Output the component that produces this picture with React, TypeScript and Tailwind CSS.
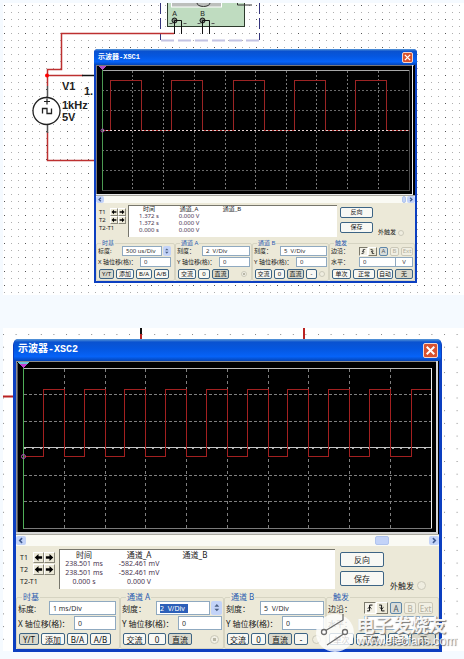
import { useId } from 'react';
import clsx from 'clsx';

const FONT = "font-['Noto_Sans','Noto_Sans_CJK_SC',sans-serif]";

/* ---------- size themes for the two oscilloscope windows ---------- */

const small = {
  frame: 'px-[2px] pb-[2px] rounded-t-[4px]',
  title: 'h-[16px] pl-[2px] pr-[2px] text-[7px] leading-[10px]',
  close: 'size-[11px] rounded-[2px]',
  scroll: 'h-[8px]',
  scrollButton: 'w-[8px] h-[7px]',
  thumb: 'w-[4px] mr-[1px]',
  text: 'text-[6px] leading-[7px]',
  measure: 'h-[35px] pt-[2px]',
  cursors: 'w-[32px] pl-[3px] pt-[3px]',
  cursorRow: 'h-[8px]',
  cursorLabel: 'w-[11px]',
  cursorButton: 'w-[8px] h-[8px]',
  readout: 'h-[32px] w-[209px]',
  readRow: 'h-[7px]',
  columns: ['w-[40px]', 'w-[40px]', 'w-[46px]'],
  actions: 'w-[33px] ml-[3px] gap-[4px] pt-[2px]',
  action: 'h-[11px]',
  external: 'ml-[5px] pb-[2px] gap-[2px]',
  radio: 'size-[6px]',
  groups: 'grid-cols-[79fr_77fr_77fr_86fr] pt-[2px]',
  legend: 'ml-[3px] leading-[6px]',
  field: 'h-[10px]',
  fieldPad: 'pl-[3px]',
  spinner: 'w-[8px]',
  rows: 'gap-[1px] pb-[1px]',
  buttons: 'pt-[1px] gap-[2px]',
  button: 'h-[10px]',
  icon: 'w-[9px] h-[9px]',
  letter: 'h-[9px] ml-[2px]',
};

const large: typeof small = {
  frame: 'px-[3px] pb-[3px] rounded-t-[6px]',
  title: 'h-[22px] pl-[2px] pr-[1px] text-[10px] leading-[14px]',
  close: 'size-[15px] rounded-[2px]',
  scroll: 'h-[12px]',
  scrollButton: 'w-[10px] h-[9px]',
  thumb: 'w-[14px] mr-[40px]',
  text: 'text-[8px] leading-[9px]',
  measure: 'h-[46px] pt-[3px]',
  cursors: 'w-[43px] pl-[4px] pt-[2px]',
  cursorRow: 'h-[12px]',
  cursorLabel: 'w-[13px]',
  cursorButton: 'w-[11px] h-[11px]',
  readout: 'h-[40px] w-[276px]',
  readRow: 'h-[9px]',
  columns: ['w-[48px]', 'w-[62px]', 'w-[50px]'],
  actions: 'w-[44px] ml-[5px] gap-[4px] pt-[3px]',
  action: 'h-[15px]',
  external: 'ml-[6px] pb-[2px] gap-[3px]',
  radio: 'size-[9px]',
  groups: 'grid-cols-[104fr_104fr_102fr_113fr] pt-[1px]',
  legend: 'ml-[4px] leading-[8px]',
  field: 'h-[14px]',
  fieldPad: 'pl-[3px]',
  spinner: 'w-[11px]',
  rows: 'gap-[1px] pb-[3px]',
  buttons: 'pt-[2px] gap-[2px]',
  button: 'h-[12px]',
  icon: 'w-[12px] h-[12px]',
  letter: 'h-[12px] ml-[2px]',
};

type Theme = typeof small;

/* ---------- small controls ---------- */

function PushButton({ t, label, width, pressed }: { t: Theme; label: string; width: string; pressed?: boolean }) {
  return (
    <button
      type="button"
      className={clsx(
        'flex shrink-0 items-center justify-center whitespace-nowrap rounded-[2px] border border-[#3d6484] text-[#111]',
        t.button,
        width,
        pressed ? 'bg-[#d9d8cc]' : 'bg-[#f8f8f4]',
      )}
    >
      {label}
    </button>
  );
}

type FieldProps = {
  t: Theme;
  label: string;
  labelWidth: string;
  value: string;
  valueText: string;
  selected?: boolean;
  spinner?: boolean;
  unit?: string;
  endPad?: string;
};

function Field({ t, label, labelWidth, value, valueText, selected, spinner, unit, endPad }: FieldProps) {
  const id = useId();
  return (
    <div className={clsx('flex items-center', t.field, endPad)}>
      <label htmlFor={id} className={clsx('shrink-0 whitespace-nowrap text-[#1a1a1a]', labelWidth)}>
        {label}
      </label>
      <span className={clsx('flex h-full min-w-0 flex-1 items-center border border-[#8fa9c0] bg-white', t.fieldPad)}>
        <input
          id={id}
          defaultValue={value}
          className={clsx(
            'min-w-0 outline-none',
            valueText,
            selected ? 'w-[28px] bg-[#2c5fb8] text-white' : 'w-full text-[#333]',
          )}
        />
      </span>
      {unit && (
        <input
          aria-label="V"
          defaultValue={unit}
          className={clsx('h-full w-[17px] border border-l-0 border-[#8fa9c0] bg-white text-center text-[#444]', valueText)}
        />
      )}
      {spinner && (
        <button type="button" className={clsx('ml-[1px] flex h-full items-center justify-center rounded-[2px] bg-[#c3d3f8]', t.spinner)}>
          <svg viewBox="0 0 8 10" className="h-[80%] w-[70%]">
            <path d="M1.5 4 4 1.3 6.5 4zM1.5 6.2 4 8.9 6.5 6.2z" fill="#4d6185" />
          </svg>
        </button>
      )}
    </div>
  );
}

function Radio({ t, label, dot }: { t: Theme; label: string; dot?: boolean }) {
  return (
    <input
      type="radio"
      aria-label={label}
      className={clsx(
        'shrink-0 appearance-none rounded-full border border-[#cbc9ba]',
        t.radio,
        dot ? 'bg-[radial-gradient(circle,#b8b6a6_35%,#f1efe4_40%)]' : 'bg-[#efede0]',
      )}
    />
  );
}

function Arrow({ flip }: { flip?: boolean }) {
  return (
    <svg viewBox="0 0 10 10" className={clsx('h-full w-full', flip && 'rotate-180')}>
      <path d="M.8 5 5 1.2v2.5h4v2.6H5v2.5z" fill="#000" />
    </svg>
  );
}

function Chevron({ flip }: { flip?: boolean }) {
  return (
    <svg viewBox="0 0 10 10" className={clsx('h-full w-full', flip && 'rotate-180')}>
      <path d="M6.2 2.4 3.6 5l2.6 2.6" fill="none" stroke="#3f5a92" strokeWidth="1.8" />
    </svg>
  );
}

function EdgeIcon({ falling }: { falling?: boolean }) {
  return (
    <svg viewBox="0 0 12 12" className="h-full w-full" fill="none" stroke="#111">
      {falling ? (
        <path d="M2.5 2.5H5.5V9.5H9M3.5 5.2 5.5 7.4 7.8 5.2" strokeWidth="1.2" />
      ) : (
        <path d="M2.5 9.5H5.5V2.5H9M3.5 6.8 5.5 4.6 7.8 6.8" strokeWidth="1.2" />
      )}
    </svg>
  );
}

/* ---------- scope screens ---------- */

function SmallTrace() {
  const columns = [36.5, 67.5, 98.5, 129.5, 159.5, 190.5, 220.5, 251.5, 282.5];
  const highs = [[14, 45], [75, 106], [137, 168], [198, 229], [259, 290]];
  const wave =
    'M6 65.5' + highs.map(([a, b]) => `H${a + 0.5}V15.5H${b + 0.5}V65.5`).join('') + 'H313';
  return (
    <svg viewBox="0 0 319 130" className="block w-full bg-black" shapeRendering="crispEdges">
      <path d="M1 .5H318M.5 0V130" stroke="#77777b" />
      <path d="M316.5 0V129.500M0 129.500H317" stroke="#e8e8e8" strokeWidth="1" fill="none" />
      <path d="M6 5.5H313" stroke="#a8a8a8" />
      <path d="M313.500 5V125.500H6" stroke="#4c4c4c" fill="none" />
      {columns.map((x) => (
        <path key={x} d={`M${x} 6V125`} stroke="#777" strokeDasharray="2 2" />
      ))}
      {[25.5, 45.5, 85.5, 105.5].map((y) => (
        <path key={y} d={`M6 ${y}H313`} stroke="#6a6a6a" strokeDasharray="2 2" />
      ))}
      <path d={wave} stroke="#9c2424" fill="none" />
      <path d="M6 65.5H313" stroke="#e8d5d5" strokeDasharray="2 2" />
      <path d="M6.500 5V125" stroke="#4c9a52" />
      <path d="M2 1h9L6.500 5z" fill="#b34fc4" />
      <circle cx="6.500" cy="65.500" r="1.500" stroke="#b052b8" fill="none" shapeRendering="auto" />
    </svg>
  );
}

function LargeTrace() {
  const columns = [48.5, 89.5, 129.5, 170.5, 211.5, 252.5, 292.5, 333.5, 374.5];
  const wave =
    'M7 95.500' + columns.map((x) => `H${x - 21}V28.500H${x}V95.500`).join('') + 'H395.500V28.500H415';
  return (
    <svg viewBox="0 0 423 173" className="block w-full bg-black" shapeRendering="crispEdges">
      <path d="M0 .5H422M.5 0V172" stroke="#8d8d8d" />
      <path d="M1.500 2V172" stroke="#55555a" />
      <path d="M421 0V171.500H0" stroke="#d5d5d5" strokeWidth="2" fill="none" />
      <path d="M8 7.500H416" stroke="#bdbdbd" />
      <path d="M415.500 7V167.500" stroke="#eee" />
      <path d="M8 167.500H416" stroke="#7a7a7a" />
      {columns.map((x) => (
        <path key={x} d={`M${x} 8V167`} stroke="#808080" strokeDasharray="3 3" />
      ))}
      {[33.5, 60.5, 114.5, 140.5].map((y) => (
        <path key={y} d={`M8 ${y}H415`} stroke="#808080" strokeDasharray="3 2" />
      ))}
      <path d="M8 86.500H415" stroke="#c4c4c4" />
      <path d="M8 87.500H415" stroke="#aaa" strokeDasharray="2 6" />
      <path d={wave} stroke="#a32020" fill="none" />
      <path d="M7.500 7V168" stroke="#4fae58" />
      <path d="M2 1h12L7.500 7z" fill="#6ec3d6" />
      <path d="M3.500 2.500h9L7.500 7z" fill="#c03fd0" />
      <circle cx="7.500" cy="95.500" r="2" stroke="#b052b8" fill="none" shapeRendering="auto" />
    </svg>
  );
}

/* ---------- parameter groups ---------- */

type ButtonSpec = { label: string; width: string; pressed?: boolean };
type GroupSpec = {
  title: string;
  fields: Omit<FieldProps, 't' | 'valueText'>[];
  buttons: ButtonSpec[];
  radio?: 'dot' | 'plain';
};

function Group({ t, spec, valueText }: { t: Theme; spec: GroupSpec; valueText: string }) {
  return (
    <fieldset className="min-w-0 rounded-[2px] border border-[#d6d4c2] px-[1px]">
      <legend className={clsx('px-[1px] text-[#2a5bb0]', t.legend)}>{spec.title}</legend>
      <div className={clsx('flex flex-col', t.rows)}>
        {spec.fields.map((f) => (
          <Field key={f.label} t={t} valueText={valueText} {...f} />
        ))}
        <div className={clsx('flex items-center pl-[1px]', t.buttons)}>
          {spec.buttons.map((b) => (
            <PushButton key={b.label} t={t} {...b} />
          ))}
          {spec.radio && (
            <span className="ml-auto flex pr-[3px]">
              <Radio t={t} label={spec.title} dot={spec.radio === 'dot'} />
            </span>
          )}
        </div>
      </div>
    </fieldset>
  );
}

type TriggerSpec = { edgeWidth: string; letterWidths: string[]; level: string; buttons: ButtonSpec[] };

function TriggerGroup({ t, spec, valueText }: { t: Theme; spec: TriggerSpec; valueText: string }) {
  return (
    <fieldset className="min-w-0 rounded-[2px] border border-[#d6d4c2] px-[1px]">
      <legend className={clsx('px-[1px] text-[#2a5bb0]', t.legend)}>触发</legend>
      <div className={clsx('flex flex-col', t.rows)}>
        <div className={clsx('flex items-center', t.field)}>
          <span className={clsx('shrink-0 whitespace-nowrap', spec.edgeWidth)}>边沿：</span>
          <button type="button" aria-label="上升沿" className={clsx('border border-[#7c7a6c] border-r-white border-b-white bg-[#f4f2e8]', t.icon)}>
            <EdgeIcon />
          </button>
          <button type="button" aria-label="下降沿" className={clsx('border border-white border-r-[#7c7a6c] border-b-[#7c7a6c] bg-[#ece9d8]', t.icon)}>
            <EdgeIcon falling />
          </button>
          {['A', 'B', 'Ext'].map((letter, i) => (
            <button
              key={letter}
              type="button"
              disabled={i > 0}
              className={clsx(
                'flex items-center justify-center rounded-[2px] border',
                t.letter,
                spec.letterWidths[i],
                i === 0 ? 'border-[#5d86a8] bg-[#d8dcda] text-[#4a5560]' : 'border-[#cbc8b8] bg-[#f1efe3] text-[#b0ad9c]',
              )}
            >
              {letter}
            </button>
          ))}
        </div>
        <Field t={t} label="水平：" labelWidth={spec.level} value="0" valueText={valueText} unit="V" />
        <div className={clsx('flex items-center pl-[1px]', t.buttons)}>
          {spec.buttons.map((b) => (
            <PushButton key={b.label} t={t} {...b} />
          ))}
        </div>
      </div>
    </fieldset>
  );
}

/* ---------- oscilloscope window ---------- */

type ScopeProps = {
  t: Theme;
  title: string;
  readings: string[][];
  valueText: string;
  groups: GroupSpec[];
  trigger: TriggerSpec;
  trace: React.ReactNode;
  className: string;
};

function ScopeWindow({ t, title, readings, valueText, groups, trigger, trace, className }: ScopeProps) {
  return (
    <section className={clsx('bg-[#0c3fc0]', t.frame, t.text, className)}>
      <header className="-mx-[2px] rounded-t-[4px] bg-[linear-gradient(#5b9ad8_0%,#0a52cf_14%,#0557e0_45%,#0663f8_80%,#0443b4_100%)]">
        <div className={clsx('flex items-center justify-between', t.title)}>
          <h1 className="ml-[2px] whitespace-nowrap font-['Liberation_Mono','Noto_Sans_CJK_SC',monospace] font-bold text-white">{title}</h1>
          <button type="button" aria-label="关闭" className={clsx('mr-[2px] border border-[#f2d6cf] bg-[#d8522f]', t.close)}>
            <svg viewBox="0 0 12 12" className="h-full w-full">
              <path d="M2.500 2.500 9.500 9.500M9.500 2.500 2.500 9.500" stroke="#fff" strokeWidth="1.800" />
            </svg>
          </button>
        </div>
      </header>
      {trace}
      <div className={clsx('flex items-center justify-between border-t border-[#aaa9a0] bg-[#fafaf4]', t.scroll)}>
        <button type="button" aria-label="向左" className={clsx('rounded-[2px] bg-[#c3d3f8]', t.scrollButton)}>
          <Chevron />
        </button>
        <span className="flex">
          <span className={clsx('rounded-[2px] border border-[#b0c4ee] bg-[#c3d3f8]', t.thumb)} />
          <button type="button" aria-label="向右" className={clsx('rounded-[2px] bg-[#c3d3f8]', t.scrollButton)}>
            <Chevron flip />
          </button>
        </span>
      </div>
      <div className="bg-[#ece9d8] text-[#1a1a1a]">
        <div className={clsx('flex', t.measure)}>
          <div className={clsx('shrink-0', t.cursors, valueText)}>
            {['T1', 'T2'].map((c) => (
              <div key={c} className={clsx('flex items-center', t.cursorRow)}>
                <span className={t.cursorLabel}>{c}</span>
                {[false, true].map((flip) => (
                  <button
                    key={String(flip)}
                    type="button"
                    aria-label={c + (flip ? ' →' : ' ←')}
                    className={clsx('border border-white border-r-[#8a887a] border-b-[#8a887a]', t.cursorButton)}
                  >
                    <Arrow flip={flip} />
                  </button>
                ))}
              </div>
            ))}
            <div className={clsx('flex items-center', t.cursorRow)}>T2-T1</div>
          </div>
          <div className={clsx('shrink border-l border-t border-[#77766c] bg-white', t.readout)}>
            <table className="table-fixed border-collapse text-center">
              <thead>
                <tr className={t.readRow}>
                  {['时间', '通道_A', '通道_B'].map((h, i) => (
                    <th key={h} className={clsx('p-0 font-normal', t.columns[i])}>
                      {h}
                    </th>
                  ))}
                </tr>
              </thead>
              <tbody className={clsx('text-[#4a3550]', valueText)}>
                {readings.map((row, i) => (
                  <tr key={i} className={t.readRow}>
                    <td className="whitespace-nowrap p-0">{row[0]}</td>
                    <td className="whitespace-nowrap p-0">{row[1]}</td>
                    <td className="p-0" />
                  </tr>
                ))}
              </tbody>
            </table>
          </div>
          <div className={clsx('flex shrink-0 flex-col', t.actions)}>
            {['反向', '保存'].map((a) => (
              <button
                key={a}
                type="button"
                className={clsx('flex items-center justify-center rounded-[2px] border border-[#3d6484] bg-[#f8f8f4]', t.action)}
              >
                {a}
              </button>
            ))}
          </div>
          <label className={clsx('flex items-center self-end whitespace-nowrap', t.external)}>
            外触发
            <Radio t={t} label="外触发" />
          </label>
        </div>
        <div className={clsx('grid', t.groups)}>
          {groups.map((g) => (
            <Group key={g.title} t={t} spec={g} valueText={valueText} />
          ))}
          <TriggerGroup t={t} spec={trigger} valueText={valueText} />
        </div>
      </div>
    </section>
  );
}

/* ---------- data ---------- */

const smallGroups: GroupSpec[] = [
  {
    title: '时基',
    fields: [
      { label: '标度:', labelWidth: 'w-[24px]', value: '500 us/Div', spinner: true, endPad: 'pr-[2px]' },
      { label: 'X 轴位移(格)：', labelWidth: 'w-[42px]', value: '0', endPad: 'pr-[2px]' },
    ],
    buttons: [
      { label: 'Y/T', width: 'w-[15px]', pressed: true },
      { label: '添加', width: 'w-[18px]' },
      { label: 'B/A', width: 'w-[16px]' },
      { label: 'A/B', width: 'w-[15px]' },
    ],
  },
  {
    title: '通道 A',
    fields: [
      { label: '刻度：', labelWidth: 'w-[25px]', value: '2  V/Div' },
      { label: 'Y 轴位移(格)：', labelWidth: 'w-[42px]', value: '0' },
    ],
    buttons: [
      { label: '交流', width: 'w-[18px]' },
      { label: '0', width: 'w-[12px]' },
      { label: '直流', width: 'w-[17px]', pressed: true },
    ],
    radio: 'dot',
  },
  {
    title: '通道 B',
    fields: [
      { label: '刻度：', labelWidth: 'w-[26px]', value: '5  V/Div' },
      { label: 'Y 轴位移(格)：', labelWidth: 'w-[42px]', value: '0' },
    ],
    buttons: [
      { label: '交流', width: 'w-[17px]' },
      { label: '0', width: 'w-[11px]' },
      { label: '直流', width: 'w-[17px]', pressed: true },
      { label: '-', width: 'w-[11px]' },
    ],
    radio: 'plain',
  },
];

const smallTrigger: TriggerSpec = {
  edgeWidth: 'w-[28px]',
  letterWidths: ['w-[9px]', 'w-[9px]', 'w-[12px]'],
  level: 'w-[28px]',
  buttons: [
    { label: '单次', width: 'w-[19px]' },
    { label: '正常', width: 'w-[22px]' },
    { label: '自动', width: 'w-[16px]' },
    { label: '无', width: 'w-[18px]', pressed: true },
  ],
};

const largeGroups: GroupSpec[] = [
  {
    title: '时基',
    fields: [
      { label: '标度:', labelWidth: 'w-[31px]', value: '1 ms/Div', endPad: 'pr-[2px]' },
      { label: 'X 轴位移(格)：', labelWidth: 'w-[56px]', value: '0', endPad: 'pr-[2px]' },
    ],
    buttons: [
      { label: 'Y/T', width: 'w-[20px]', pressed: true },
      { label: '添加', width: 'w-[24px]' },
      { label: 'B/A', width: 'w-[21px]' },
      { label: 'A/B', width: 'w-[21px]' },
    ],
  },
  {
    title: '通道 A',
    fields: [
      { label: '刻度：', labelWidth: 'w-[34px]', value: '2  V/Div', selected: true, spinner: true },
      { label: 'Y 轴位移(格)：', labelWidth: 'w-[56px]', value: '0' },
    ],
    buttons: [
      { label: '交流', width: 'w-[23px]' },
      { label: '0', width: 'w-[18px]' },
      { label: '直流', width: 'w-[24px]', pressed: true },
    ],
    radio: 'dot',
  },
  {
    title: '通道 B',
    fields: [
      { label: '刻度：', labelWidth: 'w-[34px]', value: '5  V/Div' },
      { label: 'Y 轴位移(格)：', labelWidth: 'w-[56px]', value: '0' },
    ],
    buttons: [
      { label: '交流', width: 'w-[22px]' },
      { label: '0', width: 'w-[15px]' },
      { label: '直流', width: 'w-[24px]', pressed: true },
      { label: '-', width: 'w-[14px]' },
    ],
    radio: 'plain',
  },
];

const largeTrigger: TriggerSpec = {
  edgeWidth: 'w-[36px]',
  letterWidths: ['w-[12px]', 'w-[12px]', 'w-[15px]'],
  level: 'w-[36px]',
  buttons: [
    { label: '单次', width: 'w-[25px]' },
    { label: '正常', width: 'w-[30px]' },
    { label: '自动', width: 'w-[21px]' },
    { label: '无', width: 'w-[25px]', pressed: true },
  ],
};

/* ---------- schematics behind the windows ---------- */

function SourceSchematic() {
  return (
    <svg className="absolute inset-0 h-full w-full" fontFamily="'Liberation Sans', Arial, sans-serif">
      <defs>
        <pattern id="dots-fine" x="1" y="2" width="7" height="7" patternUnits="userSpaceOnUse">
          <rect width="1" height="1" fill="#adadad" />
        </pattern>
        <pattern id="dots-dark" x="1" y="2" width="21" height="14" patternUnits="userSpaceOnUse">
          <rect width="1" height="1" fill="#555" />
        </pattern>
      </defs>
      <rect x="1" width="100%" height="100%" fill="url(#dots-fine)" />
      <rect x="1" width="100%" height="100%" fill="url(#dots-dark)" />
      {/* instrument block with its dashed selection frame */}
      <path d="M157.500 0V37" stroke="#34347c" strokeDasharray="11 4" />
      <path d="M256.500 0V37" stroke="#34347c" strokeDasharray="11 4" />
      <path d="M158 37.500H256" stroke="#c3c3e2" strokeWidth="2" strokeDasharray="13 4" />
      <rect x="164.500" y="-2" width="77" height="25.500" fill="#bfdcc0" stroke="#2c3a2c" />
      <rect x="168.500" y="-2" width="50" height="6" fill="#bcbfbc" stroke="#fff" />
      <path d="M194 0a6.500 3.500 0 0 0 13 0" fill="none" stroke="#333" />
      <path d="M234.500 0V2H249" fill="none" stroke="#333" />
      {[171.5, 199.5].map((x, i) => (
        <g key={x} stroke="#111" fill="none">
          <text x={x} y="13" fontSize="7" textAnchor="middle" fill="#222" stroke="none">
            {i === 0 ? 'A' : 'B'}
          </text>
          <circle cx={x} cy="17.500" r="2.500" fill="#7c857c" />
          <path d={`M${x} 17.500V31M${x} 17.500H${x + 7}V31`} />
          <path d={`M${x - 5} 20.500h3M${x + 9} 20.500h3`} stroke="#555" />
        </g>
      ))}
      {/* wiring */}
      <path d="M171 30.500H58.500V66.500H44.500V83M44.500 72.500H80" fill="none" stroke="#bd3030" strokeWidth="1.500" />
      <path d="M44.500 129V157.500H92" fill="none" stroke="#bd3030" strokeWidth="1.500" />
      <path d="M79 72.500H92" stroke="#111" strokeWidth="1.500" />
      <path d="M44.500 83V94M44.500 122V130" stroke="#555" strokeWidth="1.500" />
      <circle cx="44" cy="72.500" r="2" fill="#f00" />
      {/* clock source */}
      <circle cx="43.500" cy="108" r="13.500" fill="#fff" stroke="#222" strokeWidth="1.300" />
      <path d="M44 95.500v6M41 98.500h6" stroke="#222" strokeWidth="1.200" />
      <path d="M39.500 110.500V105.500H44V110.500H48.500V105.500" fill="none" stroke="#222" strokeWidth="1.300" />
      <g fontSize="11" fontWeight="700" fill="#222">
        <text x="59" y="87">V1</text>
        <text x="81" y="92">1.</text>
        <text x="59" y="106">1kHz</text>
        <text x="59" y="118">5V</text>
      </g>
    </svg>
  );
}

function LowerSchematic() {
  return (
    <svg className="absolute inset-0 h-full w-full">
      <defs>
        <pattern id="dots-wide" x="0" y="6" width="12.600" height="12.700" patternUnits="userSpaceOnUse">
          <rect width="1" height="1" fill="#8a8a8a" />
        </pattern>
      </defs>
      <rect width="100%" height="100%" fill="url(#dots-wide)" />
      <path d="M0 68.500H12M138 6v6M301 0v12" stroke="#b92222" strokeWidth="2" />
      <path d="M138 0v6" stroke="#111" strokeWidth="2" />
    </svg>
  );
}

function Watermark() {
  return (
    <div className="pointer-events-none absolute bottom-[-2px] right-[8px] flex items-center gap-[3px]">
      <svg viewBox="0 0 38 42" className="h-[42px] w-[38px]">
        <circle cx="19" cy="22" r="19" fill="#fff" fillOpacity=".8" />
        <path d="M9 20 27 9V3M29 22 11 34" fill="none" stroke="#6c6c6c" strokeWidth="1.300" />
        <circle cx="8" cy="21" r="2.500" fill="#fff" stroke="#6c6c6c" strokeWidth="1.300" />
        <circle cx="29" cy="21" r="2.500" fill="#fff" stroke="#6c6c6c" strokeWidth="1.300" />
      </svg>
      <div className="flex flex-col whitespace-nowrap text-white/90 [text-shadow:1px_1px_1px_#777]">
        <span className="text-[18px] font-bold leading-[19px]">电子发烧友</span>
        <span className="font-['Liberation_Sans',Arial,sans-serif] text-[12px] leading-[13px]">www.elecfans.com</span>
      </div>
    </div>
  );
}

export default function App() {
  return (
    <main className={clsx('flex flex-col gap-[33px] bg-[#f5faff] pb-[8px] pl-[3px] pt-[3px]', FONT)}>
      <div className="relative h-[292px] overflow-hidden bg-white">
        <SourceSchematic />
        <ScopeWindow
          t={small}
          className="absolute left-[91px] top-[46px] w-[323px]"
          title="示波器-XSC1"
          readings={[
            ['1.372 s', '0.000 V'],
            ['1.372 s', '0.000 V'],
            ['0.000 s', '0.000 V'],
          ]}
          valueText="text-[6px]"
          groups={smallGroups}
          trigger={smallTrigger}
          trace={<SmallTrace />}
        />
      </div>
      <div className="relative h-[323px] bg-white">
        <LowerSchematic />
        <ScopeWindow
          t={large}
          className="absolute left-[10px] top-[11px] w-[429px]"
          title="示波器-XSC2"
          readings={[
            ['238.501 ms', '-582.461 mV'],
            ['238.501 ms', '-582.461 mV'],
            ['0.000 s', '0.000 V'],
          ]}
          valueText="text-[7px]"
          groups={largeGroups}
          trigger={largeTrigger}
          trace={<LargeTrace />}
        />
        <Watermark />
      </div>
    </main>
  );
}
